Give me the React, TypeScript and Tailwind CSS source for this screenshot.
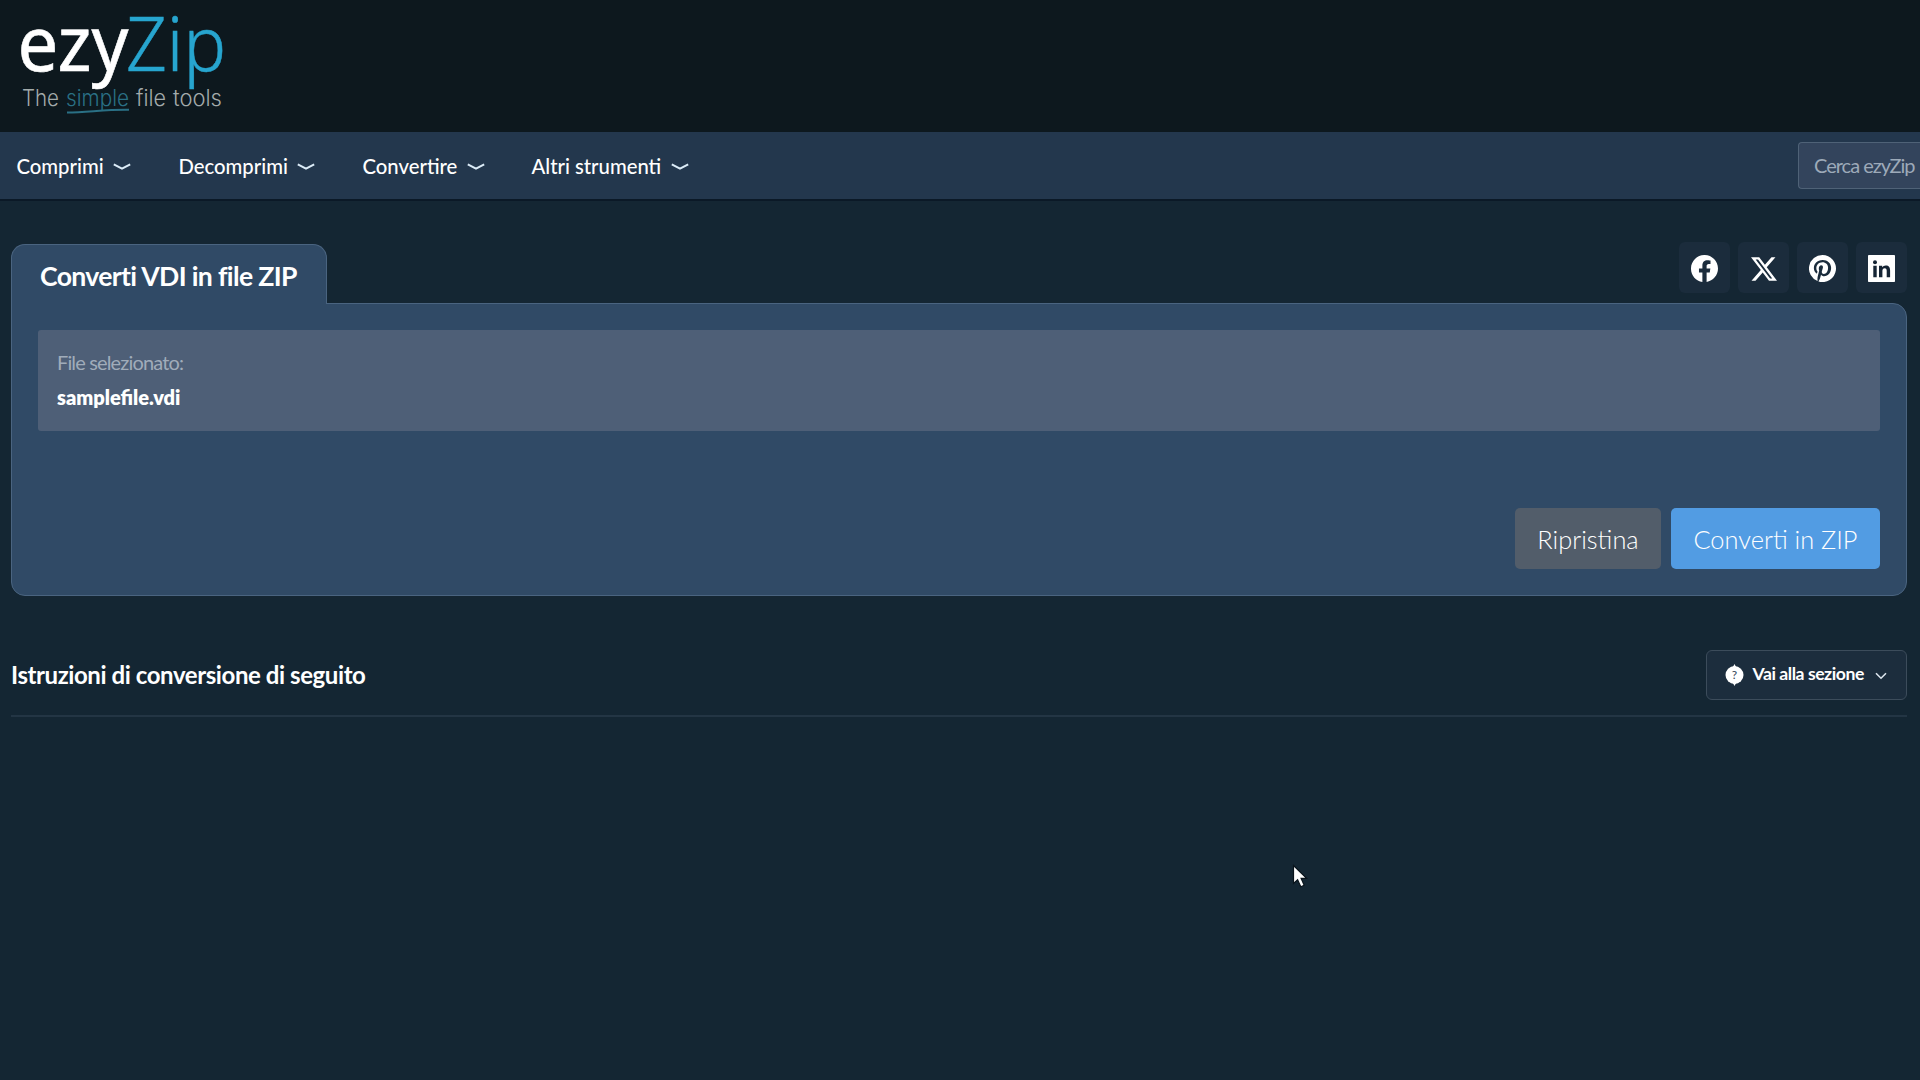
import React from 'react';
import { BsFacebook, BsTwitterX, BsPinterest } from 'react-icons/bs';

const NAV_ITEMS = [
  { label: 'Comprimi', className: 'w-[162px]' },
  { label: 'Decomprimi', className: 'w-[184px]' },
  { label: 'Convertire', className: 'w-[169px]' },
  { label: 'Altri strumenti', className: 'w-[180px]' },
];

const LinkedinIcon: React.FC = () => (
  <svg viewBox="0 0 27 27" className="w-[27px] h-[27px]">
    <rect width="27" height="27" rx="0.8" fill="#fff" />
    <g fill="#152434">
      <circle cx="7" cy="7.2" r="2" />
      <path d="M5.3 10.7h3.4v11.6H5.3zM11 10.7h3.2v1.6c.7-1.1 1.9-1.9 3.6-1.9 3.2 0 4.3 2 4.3 5.1v6.8h-3.4v-6.2c0-1.7-.4-2.8-2-2.8s-2.3 1.1-2.3 2.8v6.2H11z" />
    </g>
  </svg>
);

const Logo: React.FC = () => (
  <svg width="240" height="131" className="block" role="img" aria-label="ezyZip">
    <g fontFamily="Noto Sans, sans-serif" fontSize="76">
      <text x="17.5" y="71" fill="#fff" stroke="#fff" strokeWidth="0.6" textLength="111" lengthAdjust="spacingAndGlyphs">ezy</text>
      <text x="126" y="71" fontWeight="300" fill="#27a5cf" stroke="#27a5cf" strokeWidth="0.5" textLength="100" lengthAdjust="spacingAndGlyphs">Zip</text>
    </g>
    <g fontFamily="Inter, sans-serif" fontSize="22.5" fontWeight="300">
      <text x="22" y="105.5" fill="#a3abab" textLength="37" lengthAdjust="spacingAndGlyphs">The</text>
      <text x="66" y="105.5" fill="#2a7085" textLength="63" lengthAdjust="spacingAndGlyphs">simple</text>
      <text x="136" y="105.5" fill="#a3abab" textLength="30" lengthAdjust="spacingAndGlyphs">file</text>
      <text x="173" y="105.5" fill="#a3abab" textLength="49" lengthAdjust="spacingAndGlyphs">tools</text>
    </g>
    <path d="M67 112.5C88 112.5 103 109.5 129 109.8" fill="none" stroke="#2a7085" strokeWidth="2" />
  </svg>
);

const SocialLinks: React.FC = () => (
  <div className="flex gap-2 h-[51px]">
    {[
      <BsFacebook size={27} />,
      <BsTwitterX size={26} />,
      <BsPinterest size={27} />,
      <LinkedinIcon />,
    ].map((icon, i) => (
      <a key={i} className="w-[51px] h-[51px] pt-0.5 rounded-md bg-[#1b2c3c] text-white flex items-center justify-center">
        {icon}
      </a>
    ))}
  </div>
);

export default function App() {
  return (
    <div className="relative w-[1920px] h-[1080px] overflow-hidden bg-[#142633] font-['Lato',sans-serif] text-white">
      <header className="h-[132px] bg-[#0d181e]">
        <Logo />
      </header>

      <nav className="h-[69px] pt-px bg-[#23374d] border-b-2 border-[#0b1927] flex items-center justify-between pl-[16.5px]">
        <div className="flex">
          {NAV_ITEMS.map((item) => (
            <a key={item.label} className={`flex items-center gap-[9.5px] text-[20.3px] font-medium whitespace-nowrap ${item.className}`}>
              {item.label}
              <svg width="18" height="8" viewBox="0 0 18 8" className="mt-px" fill="none" stroke="#dcecf8" strokeWidth="2">
                <path d="M0.8 1.3L9 5.6L17.2 1.3" />
              </svg>
            </a>
          ))}
        </div>
        <div className="w-[122px] h-[47px] -mt-px pb-0.5 border border-r-0 border-[#4f6277] rounded-l bg-[#33445c] pl-[15px] flex items-center text-[20px] tracking-[-1px] text-[#9daab9] whitespace-nowrap">
          Cerca ezyZip
        </div>
      </nav>

      <main className="pl-[11px] pr-[13px] pt-[41px]">
        <div className="flex items-start justify-between h-[61px]">
          <div className="relative z-10 mt-[2px] w-[316px] h-[60px] pt-[4px] rounded-t-[14px] border border-b-0 border-[#4a6480] bg-[#304a66] pl-[28px] flex items-center">
            <h1 className="text-[26.6px] font-bold tracking-[-0.65px] whitespace-nowrap">Converti VDI in file ZIP</h1>
          </div>
          <SocialLinks />
        </div>

        <section className="h-[293px] bg-[#304a66] border border-[#4a6480] rounded-[14px] rounded-tl-none px-[26px] pt-[26px]">
          <div className="h-[101px] rounded-[3px] bg-[#4e5f77] px-[19px] pt-[18px]">
            <p className="text-[20px] leading-7 tracking-[-0.85px] text-[#a0acba]">File selezionato:</p>
            <p className="text-[20px] leading-7 mt-[7px] font-extrabold">samplefile.vdi</p>
          </div>
          <div className="flex justify-end gap-[10px] mt-[77px] font-light text-[25.4px]">
            <button className="w-[146px] h-[61px] pt-0.5 rounded-[5px] bg-[#525d6a]">Ripristina</button>
            <button className="w-[209px] h-[61px] pt-0.5 rounded-[5px] bg-[#529ce3]">Converti in ZIP</button>
          </div>
        </section>

        <div className="mt-[35px] h-[86px] pt-1 border-b-2 border-[#233544] flex items-center justify-between">
          <h2 className="-mt-px text-[24px] font-bold tracking-[-0.42px]">Istruzioni di conversione di seguito</h2>
          <button className="w-[201px] h-[50px] rounded-md border border-[#3c4c5b] bg-[#1c2d3d] pl-[18px] flex items-center">
            <svg width="19" height="22" viewBox="0 0 18 22">
              <path d="M9 0l1.6 3h-3.2zM9 22l1.6-3h-3.2z" fill="#fff" />
              <circle cx="9" cy="11" r="9" fill="#fff" />
              <text x="9" y="15.3" fontSize="12" textAnchor="middle" fill="#34475a" fontFamily="Lato, sans-serif">?</text>
            </svg>
            <span className="ml-[8.5px] -mt-0.5 text-[17.6px] font-bold tracking-[-0.45px] whitespace-nowrap">Vai alla sezione</span>
            <svg width="12" height="8" viewBox="0 0 12 8" className="ml-[11px] mt-0.5" fill="none" stroke="#dce6ee" strokeWidth="1.6">
              <path d="M1 1.2l5 5 5-5" />
            </svg>
          </button>
        </div>
      </main>

      {/* Mouse cursor */}
      <svg className="absolute left-[1292px] top-[864px]" width="18" height="25" viewBox="0 0 18 25">
        <path d="M1.5 1.5v18l4.1-3.8 3.2 7.1 3.4-1.5-3.1-6.9h5.5z" fill="#fff" stroke="#0a141c" strokeWidth="1.2" />
      </svg>
    </div>
  );
}
